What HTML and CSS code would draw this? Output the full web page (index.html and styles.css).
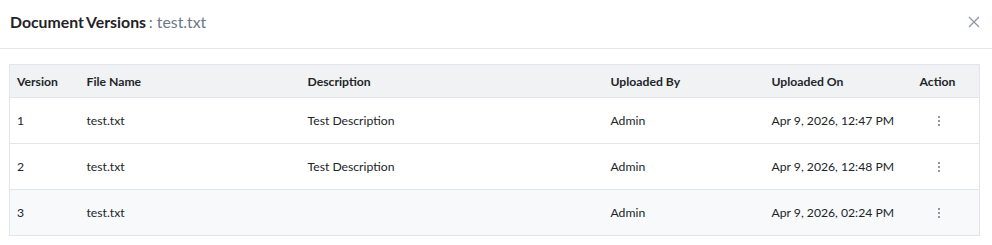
FILE: index.html
```html
<!DOCTYPE html>
<html lang="en">
<head>
    <meta charset="UTF-8">
    <title>Document Versions</title>
    <link rel="stylesheet" href="styles.css">
</head>
<body>
    <div class="modal">
        <div class="modal-header">
            <h2 class="modal-title">Document Versions <span class="file-name">: test.txt</span></h2>
            <button class="close-btn" aria-label="Close">
                <svg width="12" height="12" viewBox="0 0 12 12"><path d="M1 1L11 11M11 1L1 11" stroke="#8a96a3" stroke-width="1.2" fill="none"/></svg>
            </button>
        </div>
        <div class="modal-body">
            <table class="versions">
                <colgroup>
                    <col style="width:70px">
                    <col style="width:221px">
                    <col style="width:303px">
                    <col style="width:161px">
                    <col style="width:148px">
                    <col>
                </colgroup>
                <thead>
                    <tr>
                        <th>Version</th>
                        <th>File Name</th>
                        <th>Description</th>
                        <th>Uploaded By</th>
                        <th>Uploaded On</th>
                        <th>Action</th>
                    </tr>
                </thead>
                <tbody>
                    <tr>
                        <td>1</td>
                        <td>test.txt</td>
                        <td>Test Description</td>
                        <td>Admin</td>
                        <td>Apr 9, 2026, 12:47 PM</td>
                        <td><span class="kebab"><i></i><i></i><i></i></span></td>
                    </tr>
                    <tr>
                        <td>2</td>
                        <td>test.txt</td>
                        <td>Test Description</td>
                        <td>Admin</td>
                        <td>Apr 9, 2026, 12:48 PM</td>
                        <td><span class="kebab"><i></i><i></i><i></i></span></td>
                    </tr>
                    <tr class="striped">
                        <td>3</td>
                        <td>test.txt</td>
                        <td></td>
                        <td>Admin</td>
                        <td>Apr 9, 2026, 02:24 PM</td>
                        <td><span class="kebab"><i></i><i></i><i></i></span></td>
                    </tr>
                </tbody>
            </table>
        </div>
    </div>
</body>
</html>
```
FILE: styles.css
```css
body {
    margin: 0;
    font-family: Lato, "Open Sans", sans-serif;
    color: #212529;
    background: white;
}

.modal {
    width: 992px;
}

.modal-header {
    display: flex;
    align-items: center;
    justify-content: space-between;
    padding: 0 12px 0 10px;
    border-bottom: 1px solid #e4e6e9;
    box-sizing: border-box;
    height: 49px;
}

.modal-title {
    margin: -5px 0 0;
    font-size: 15.8px;
    font-weight: bold;
    color: #1f2328;
    word-spacing: -1px;
}

.file-name {
    font-weight: normal;
    color: #6b7787;
    word-spacing: 0;
}

.close-btn {
    border: none;
    background: none;
    padding: 0;
    margin-top: -4px;
    cursor: pointer;
    display: flex;
}

.modal-body {
    padding: 15px 12px 0 9px;
}

.versions {
    width: 971px;
    border-collapse: collapse;
    table-layout: fixed;
    font-size: 12.2px;
    border: 1px solid #e3e5e8;
}

.versions th {
    background: #f1f2f4;
    text-align: left;
    font-weight: bold;
    height: 32px;
    padding: 0 7px;
    color: #212529;
    border-bottom: 1px solid #e3e5e8;
}

.versions td {
    height: 45px;
    padding: 0 7px;
    color: #212529;
    border-bottom: 1px solid #e3e5e8;
}

.versions tr.striped td {
    background: #f8f9fb;
}

.kebab {
    display: inline-flex;
    flex-direction: column;
    gap: 2px;
    margin-left: 18px;
    vertical-align: middle;
    margin-top: -2px;
}

.kebab i {
    display: block;
    width: 2px;
    height: 2px;
    background: #6b7787;
    border-radius: 1px;
}
```
